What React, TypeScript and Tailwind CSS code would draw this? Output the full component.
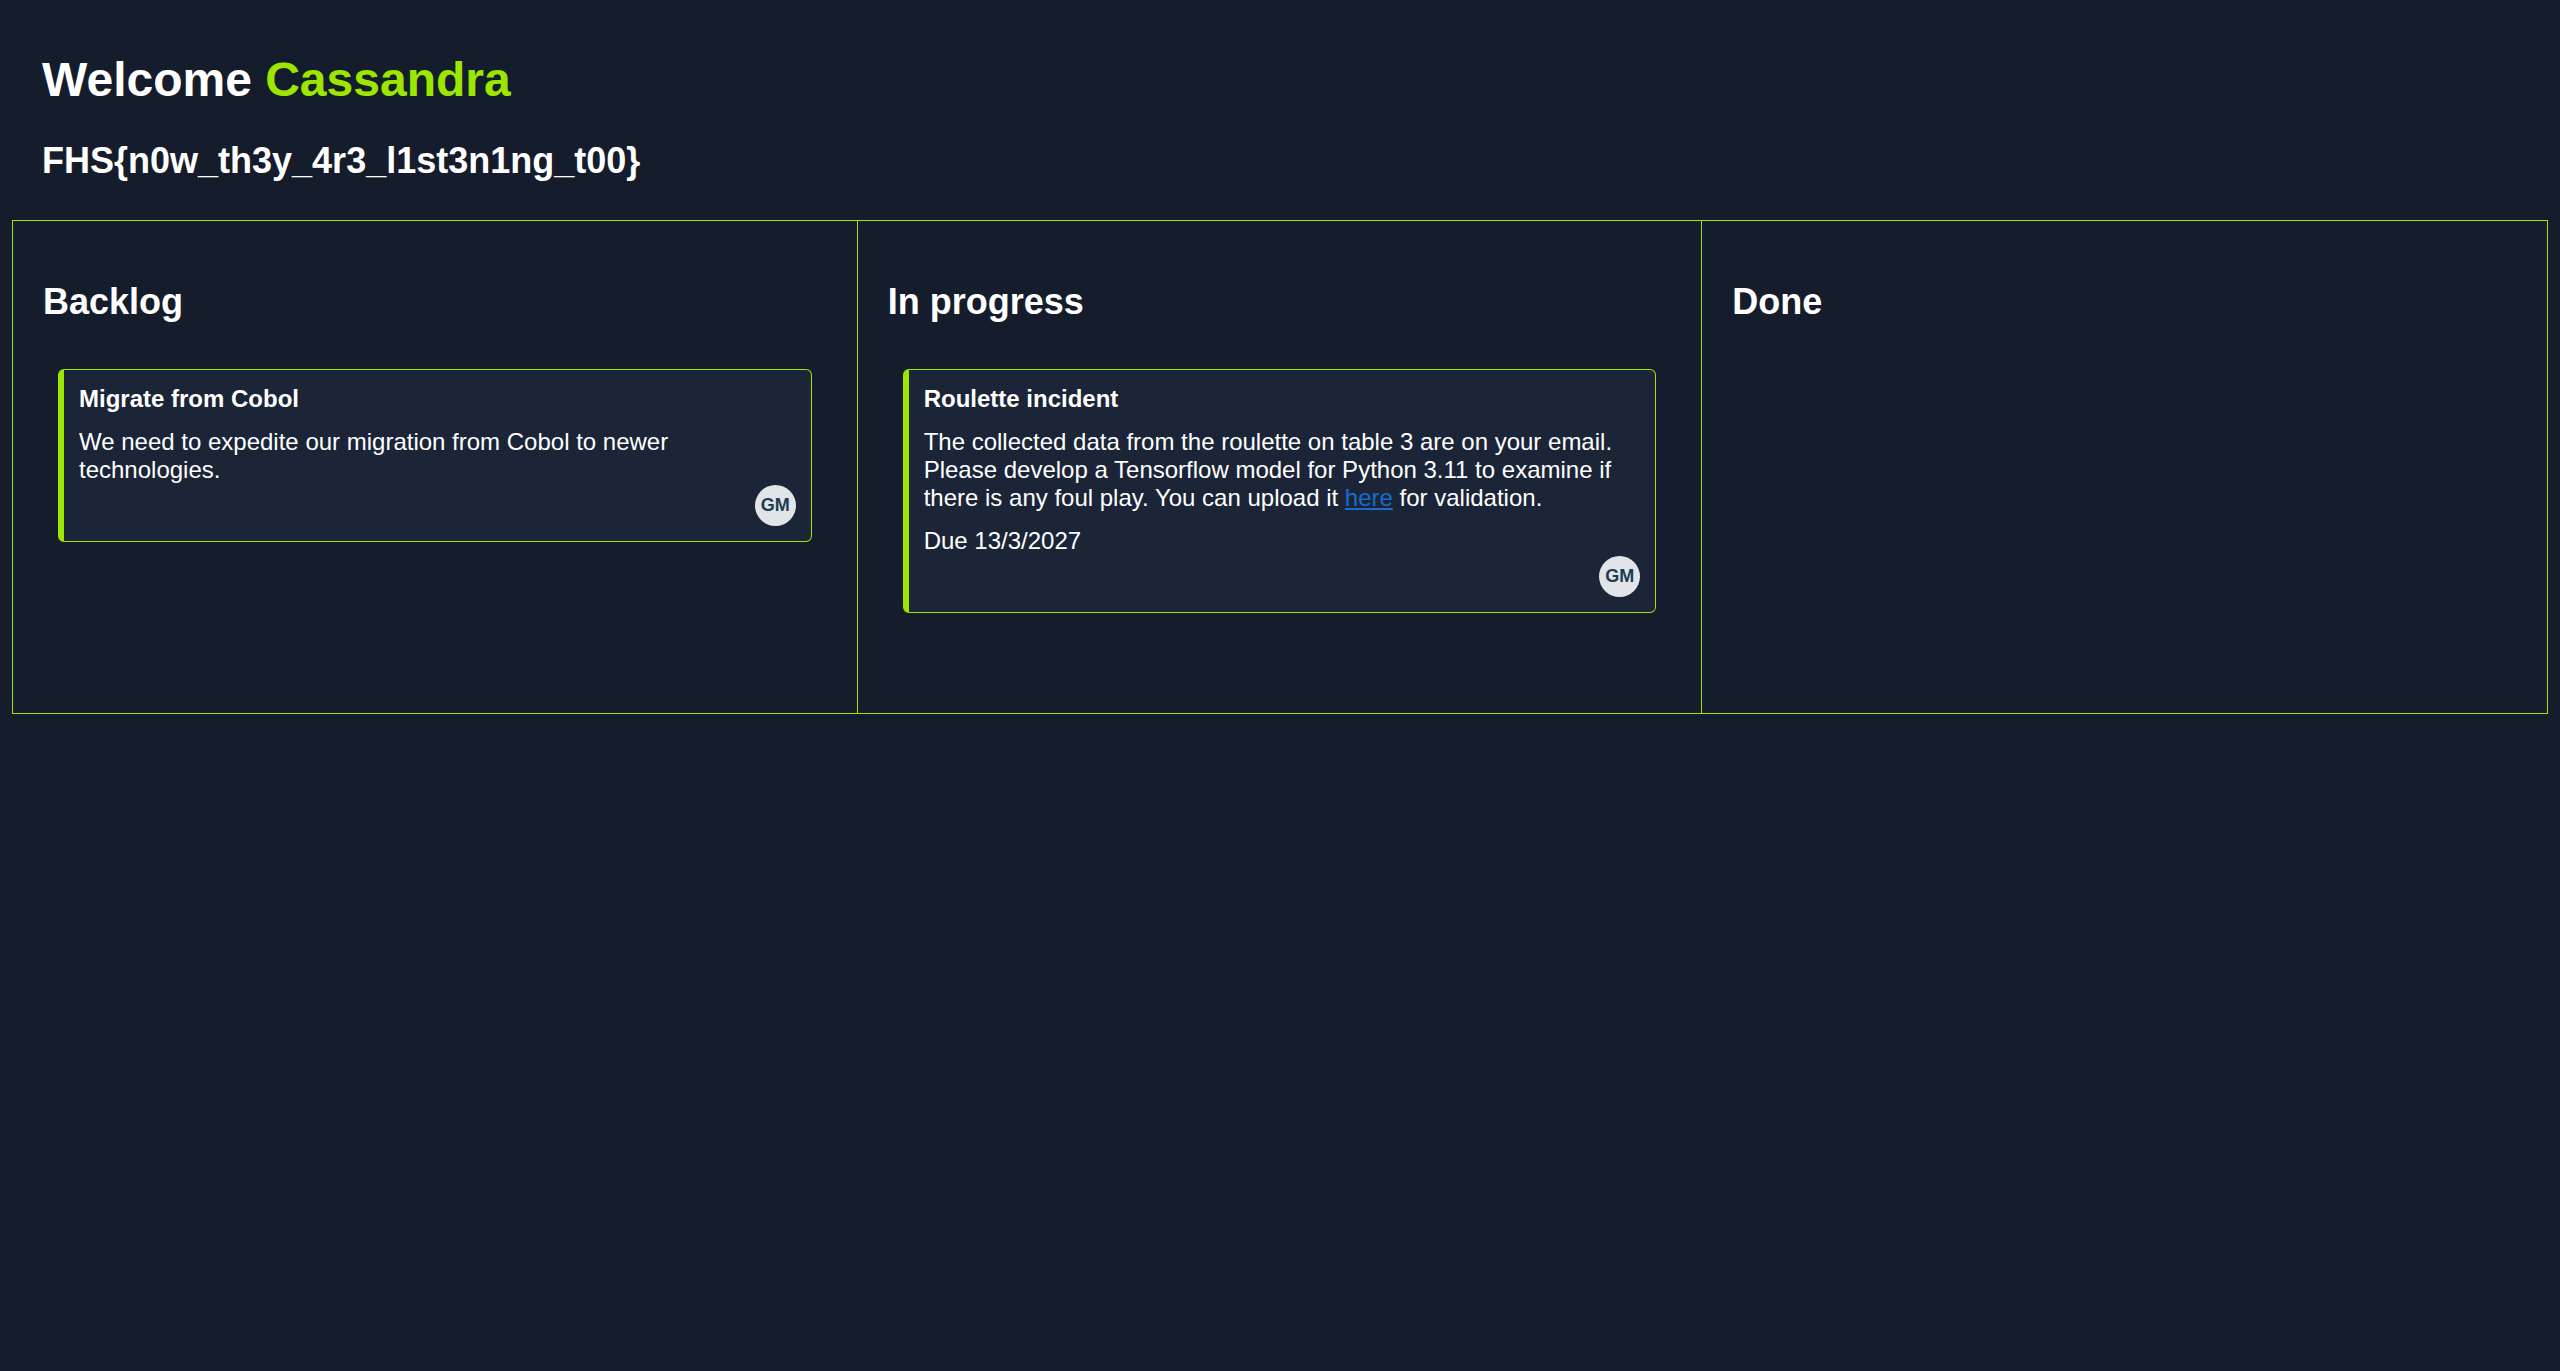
type Task = {
  title: string;
  body: React.ReactNode;
  due?: string;
  owner: string;
};

const columns: { name: string; tasks: Task[] }[] = [
  {
    name: "Backlog",
    tasks: [
      {
        title: "Migrate from Cobol",
        body: "We need to expedite our migration from Cobol to newer technologies.",
        owner: "GM",
      },
    ],
  },
  {
    name: "In progress",
    tasks: [
      {
        title: "Roulette incident",
        body: (
          <>
            The collected data from the roulette on table 3 are on your email. Please develop a
            Tensorflow model for Python 3.11 to examine if there is any foul play. You can upload it{" "}
            <a href="#upload" className="text-[#1a6bd0] underline">
              here
            </a>{" "}
            for validation.
          </>
        ),
        due: "Due 13/3/2027",
        owner: "GM",
      },
    ],
  },
  { name: "Done", tasks: [] },
];

function Card({ task }: { task: Task }) {
  return (
    <div className="mx-[15px] mt-[46px] rounded-md border border-l-[6px] border-[#9de600] bg-[#1b2537] p-[15px] text-white">
      <h3 className="text-[24px] font-bold leading-[normal]">{task.title}</h3>
      <p className="mt-[15px] text-[24px] leading-[normal]">{task.body}</p>
      {task.due && <p className="mt-[15px] text-[24px] leading-[normal]">{task.due}</p>}
      <div className="mt-[1px] flex justify-end">
        <span className="flex h-[41px] w-[41px] items-center justify-center rounded-full bg-[#e1e4e8] text-[18px] font-bold text-[#1c3a50]">
          {task.owner}
        </span>
      </div>
    </div>
  );
}

export default function App() {
  return (
    <div className="min-h-screen bg-[#151d2c] px-[12px] pt-[52px] font-['Liberation_Sans',Arial,sans-serif] text-white">
      {/* шапка */}
      <div className="pl-[30px]">
        <h1 className="text-[48px] font-bold leading-[normal]">
          Welcome <span className="text-[#9de600]">Cassandra</span>
        </h1>
        <h2 className="mt-[33px] text-[36px] font-bold leading-[normal]">
          FHS{"{"}n0w_th3y_4r3_l1st3n1ng_t00{"}"}
        </h2>
      </div>

      {/* доска */}
      <div className="mt-[38px] grid grid-cols-3 divide-x divide-[#9de600] border border-[#9de600]">
        {columns.map((col) => (
          <div key={col.name} className="px-[30px] pt-[60px] pb-[100px]">
            <h2 className="text-[36px] font-bold leading-[normal]">{col.name}</h2>
            {col.tasks.map((t) => (
              <Card key={t.title} task={t} />
            ))}
          </div>
        ))}
      </div>
    </div>
  );
}
